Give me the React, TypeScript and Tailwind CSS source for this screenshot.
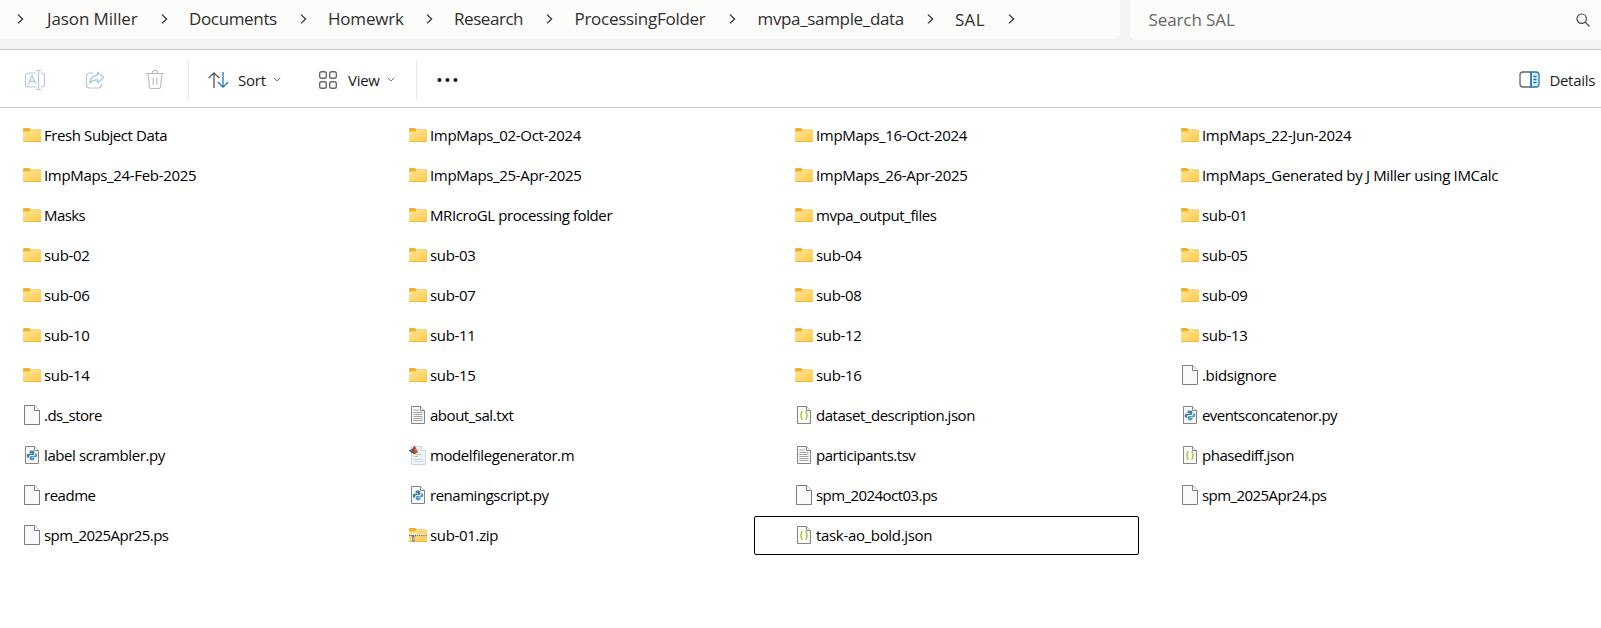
type IconKind = 'folder' | 'file' | 'text' | 'json' | 'python' | 'matlab' | 'zip';

interface Entry {
  name: string;
  kind: IconKind;
  tracking?: string;
  focused?: boolean;
}

const T3 = 'tracking-[-0.33px]';
const T35 = 'tracking-[-0.41px]';
const T4 = 'tracking-[-0.47px]';
const T5 = 'tracking-[-0.56px]';

const folder = (name: string, tracking: string = T3): Entry => ({ name, kind: 'folder', tracking });

const entries: Entry[] = [
  folder('Fresh Subject Data', T35),
  folder('ImpMaps_02-Oct-2024'),
  folder('ImpMaps_16-Oct-2024'),
  folder('ImpMaps_22-Jun-2024'),
  folder('ImpMaps_24-Feb-2025'),
  folder('ImpMaps_25-Apr-2025'),
  folder('ImpMaps_26-Apr-2025'),
  folder('ImpMaps_Generated by J Miller using IMCalc'),
  folder('Masks', T5),
  folder('MRIcroGL processing folder', T35),
  folder('mvpa_output_files', T35),
  folder('sub-01'),
  folder('sub-02'),
  folder('sub-03'),
  folder('sub-04'),
  folder('sub-05'),
  folder('sub-06'),
  folder('sub-07'),
  folder('sub-08'),
  folder('sub-09'),
  folder('sub-10'),
  folder('sub-11'),
  folder('sub-12'),
  folder('sub-13'),
  folder('sub-14'),
  folder('sub-15'),
  folder('sub-16'),
  { name: '.bidsignore', kind: 'file', tracking: T3 },
  { name: '.ds_store', kind: 'file', tracking: T5 },
  { name: 'about_sal.txt', kind: 'text', tracking: T4 },
  { name: 'dataset_description.json', kind: 'json', tracking: T4 },
  { name: 'eventsconcatenor.py', kind: 'python', tracking: T5 },
  { name: 'label scrambler.py', kind: 'python', tracking: T35 },
  { name: 'modelfilegenerator.m', kind: 'matlab', tracking: T35 },
  { name: 'participants.tsv', kind: 'text', tracking: T4 },
  { name: 'phasediff.json', kind: 'json', tracking: T4 },
  { name: 'readme', kind: 'file', tracking: T4 },
  { name: 'renamingscript.py', kind: 'python', tracking: T4 },
  { name: 'spm_2024oct03.ps', kind: 'file', tracking: T5 },
  { name: 'spm_2025Apr24.ps', kind: 'file', tracking: T5 },
  { name: 'spm_2025Apr25.ps', kind: 'file', tracking: T5 },
  { name: 'sub-01.zip', kind: 'zip', tracking: T3 },
  { name: 'task-ao_bold.json', kind: 'json', tracking: T3, focused: true },
];

const crumbs = [
  { label: 'Jason Miller', className: 'w-[115px] pl-[1.5px] tracking-[-0.1px]' },
  { label: 'Documents', className: 'w-[110.5px] tracking-[-0.35px]' },
  { label: 'Homewrk', className: 'w-[97.5px] tracking-[-0.2px]' },
  { label: 'Research', className: 'w-[92px] tracking-[-0.45px]' },
  { label: 'ProcessingFolder', className: 'w-[154.5px] tracking-[-0.28px]' },
  { label: 'mvpa_sample_data', className: 'w-[169px] tracking-[-0.34px]' },
  { label: 'SAL', className: 'w-[53px] pt-px tracking-[0.3px]' },
];

function Crumb({ label, className }: { label: string; className: string }) {
  return (
    <>
      <span className={`shrink-0 whitespace-nowrap ${className}`}>{label}</span>
      <CrumbChevron />
    </>
  );
}

function CrumbChevron() {
  return (
    <svg className="mr-[21.5px] h-3 w-[7px] shrink-0" viewBox="0 0 7 12" fill="none" stroke="#333" strokeWidth="1.3">
      <path d="M1 1.6 5.6 6 1 10.4" />
    </svg>
  );
}

function Chevron() {
  return (
    <svg className="h-[5px] w-2 shrink-0" viewBox="0 0 8 5" fill="none" stroke="#777" strokeWidth="1">
      <path d="M.8.8 4 4 7.2.8" />
    </svg>
  );
}

function Page() {
  return (
    <>
      <path d="M3.5 1.5h9l4 4v13h-13z" fill="#fafafa" stroke="#858585" />
      <path d="M12.5 1.5v4h4" fill="#fff" stroke="#858585" />
    </>
  );
}

function FolderShape() {
  return (
    <>
      <path d="M1 5V4a1 1 0 0 1 1-1h5l1.6 1.5H18a1 1 0 0 1 1 1V8H1z" fill="#f0b02a" />
      <path d="M1 6.6h6L8.8 5H18a1 1 0 0 1 1 1v10a1 1 0 0 1-1 1H2a1 1 0 0 1-1-1z" fill="url(#folder-face)" />
      <path d="M1.3 16.5h17.4" stroke="#e9b440" strokeWidth=".9" />
    </>
  );
}

function FileIcon({ kind }: { kind: IconKind }) {
  return (
    <svg className="size-5 shrink-0" viewBox="0 0 20 20" fill="none">
      {kind === 'folder' && <FolderShape />}
      {kind === 'file' && (
        <>
          <path d="M2.5.5h10.2l4.8 4.8v14.2h-15z" fill="#f9f9f9" stroke="#7d7d7d" />
          <path d="M12.5.5v5h5" fill="#fff" stroke="#7d7d7d" />
        </>
      )}
      {kind === 'text' && (
        <>
          <Page />
          <path d="M5.3 5h5.7M5.3 7.5h9.2M5.3 9.5h9.2M5.3 11.5h9.2M5.3 13.5h9.2M5.3 15.5h9.2" stroke="#999" strokeWidth=".9" />
        </>
      )}
      {kind === 'json' && (
        <>
          <Page />
          <path
            d="M8.7 6.8c-1.4 0-1.3.7-1.3 1.7 0 1.100 0 1.700-1.100 2 1.100.2 1.100 1 1.100 2.100 0 1-.1 1.700 1.300 1.700M11.300 6.800c1.400 0 1.300.7 1.300 1.700 0 1.100 0 1.700 1.100 2-1.100.2-1.100 1-1.100 2.100 0 1 .1 1.700-1.300 1.700"
            stroke="#b5c43c"
            strokeWidth="1.500"
          />
        </>
      )}
      {kind === 'python' && (
        <>
          <Page />
          <path
            d="M9.8 5.6c-1.6 0-2.3.5-2.3 1.4v1.2H10v.6H6.2c-1 0-1.500.8-1.500 2s.5 2 1.400 2h1v-1.300c0-.9.7-1.500 1.500-1.500h2.500c.7 0 1.200-.5 1.200-1.200V7c0-.9-.9-1.400-2.500-1.400z"
            fill="#3f83ab"
          />
          <path
            d="M10.200 15.400c1.600 0 2.300-.5 2.300-1.400v-1.200H10v-.6h3.800c1 0 1.500-.8 1.500-2s-.5-2-1.400-2h-.8v1.300c0 .9-.7 1.500-1.500 1.500H9c-.7 0-1.300.5-1.300 1.200V14c0 .9.9 1.400 2.500 1.400z"
            fill="#5b9fbd"
          />
        </>
      )}
      {kind === 'matlab' && (
        <>
          <path d="M3.5 1.5h10l4 4v14h-14z" fill="#edf2f6" stroke="#cdd7df" />
          <path d="M13.5 1.5v4h4" fill="#fff" stroke="#cdd7df" />
          <path d="M8 9.5h5M6 11.5h4" stroke="#a9d3a0" />
          <path d="M6 14.5h9M6 16.5h9" stroke="#cfdae2" />
          <path d="M.6 5.6 4 4l2.2-3L8 8.4 5.4 7.2 4 8.6z" fill="#2f6f9f" />
          <path d="M6.3.8c1.4.8 2.4 4.6 4 6.8C8.6 6.9 7.6 9.600 5.9 9.300 5.3 8.200 4.700 7.600 4 7.200 5.200 6 5.600 2.200 6.300.8z" fill="#b63a1f" />
          <path d="M6.4 1.200c.9 1.400 1.500 4 2.700 5.700-.8.3-1.200.8-1.700 1.200z" fill="#e67a2e" />
        </>
      )}
      {kind === 'zip' && (
        <>
          <FolderShape />
          <path d="M2 10.2h16.5" stroke="#fff0b8" strokeWidth="2.6" />
          <path d="M7 10.5h12" stroke="#6f6f6f" strokeWidth="1.6" strokeDasharray="1.2 .9" />
          <path d="M1 10.5h3" stroke="#8a8a8a" strokeWidth="1.5" />
          <path d="M3.5 10h3v6.500H4.200v-4z" fill="#7d7f84" />
          <path d="M5.3 12.500v2.500" stroke="#d6d6d6" />
        </>
      )}
    </svg>
  );
}

function Row({ entry }: { entry: Entry }) {
  const box = entry.focused
    ? 'mt-px h-[39px] w-[385px] rounded-[2px] border border-black pb-px pl-[39px]'
    : 'h-10 w-[386px] pl-10';
  return (
    <div className={`flex items-center ${box}`}>
      <FileIcon kind={entry.kind} />
      <span className={`ml-[2px] whitespace-nowrap ${entry.tracking ?? ''}`}>{entry.name}</span>
    </div>
  );
}

function AddressBar() {
  return (
    <header className="flex h-[50px] items-start gap-[10px] border-b border-[#c6c9c2] bg-[#f4f3f1] text-[17px] text-[#2e2e2e]">
      <nav className="flex h-[39px] w-[1120px] items-center rounded-br-[5px] bg-[#fcfcfa] pb-px pl-[17px]">
        <CrumbChevron />
        {crumbs.map((c) => (
          <Crumb key={c.label} label={c.label} className={c.className} />
        ))}
      </nav>
      <div className="flex h-10 flex-1 items-center justify-between rounded-bl-[5px] bg-[#fcfcfa] pr-[11px] pl-[18.5px] text-[#666]">
        <span className="tracking-[-0.1px]">Search SAL</span>
        <svg className="size-[14px]" viewBox="0 0 14 14" fill="none" stroke="#444" strokeWidth="1.2">
          <circle cx="5.7" cy="5.7" r="4.7" />
          <path d="m9.2 9.200 4.300 4.300" />
        </svg>
      </div>
    </header>
  );
}

function Toolbar() {
  return (
    <div className="flex h-[58px] items-center border-b border-[#c6c6c6] pt-[2px] pl-6 text-[#1b1b1b]">
      <svg className="size-[22px] shrink-0" viewBox="0 0 22 22" fill="none" strokeWidth="1.2">
        <path d="M12 4H4.5A3 3 0 0 0 1.5 7v8a3 3 0 0 0 3 3H12M17 4c2.200 0 3.500 1.200 3.500 3v8c0 1.800-1.300 3-3.500 3" stroke="#c4c4c4" />
        <path d="M14.5 1.5v19M11.8 1.500h5.400M11.800 20.500h5.400M4.300 15 8 6.500l3.700 8.500M5.600 12.300h4.800" stroke="#a5cbe8" />
      </svg>
      <svg className="ml-[39px] size-5 shrink-0" viewBox="0 0 20 20" fill="none" strokeWidth="1.2" strokeLinejoin="round">
        <path d="M8 3H4.500A3 3 0 0 0 1.500 6v9a3 3 0 0 0 3 3h9a3 3 0 0 0 3-3v-1.500" stroke="#c4c4c4" />
        <path d="M12.500 2.200 18.800 7.500l-6.300 5.300V9.800c-3.500-.2-5.700.9-7.700 3.400.4-4.300 3.100-7.600 7.700-8z" stroke="#9cc8ea" />
      </svg>
      <svg className="ml-10 size-5 shrink-0" viewBox="0 0 20 20" fill="none" stroke="#bcbcbc" strokeWidth="1.2" strokeLinecap="round">
        <path d="M1.500 3.500h17M7.200 3.300a2.800 2.800 0 0 1 5.600 0M3 3.800l1.500 13a2 2 0 0 0 2 1.700h7a2 2 0 0 0 2-1.700l1.500-13M8.200 8.200v6M11.800 8.200v6" />
      </svg>
      <div className="ml-[23px] h-10 w-px shrink-0 bg-[#e6e6e6]" />
      <svg className="ml-[19px] h-[18px] w-[21px] shrink-0" viewBox="0 0 21 18" fill="none" strokeWidth="1.3">
        <path d="M6 17V2M.8 7 6 1.800 11.200 7" stroke="#555" />
        <path d="M15 1v15M9.800 11 15 16.200 20.200 11" stroke="#1f78c8" />
      </svg>
      <span className="ml-[9px] w-[35px] tracking-[-0.2px]">Sort</span>
      <Chevron />
      <svg className="ml-[37px] size-5 shrink-0" viewBox="0 0 20 20" fill="none" stroke="#666" strokeWidth="1.4">
        <rect x="1.7" y="1.7" width="6.6" height="6.6" rx="1.8" />
        <rect x="11.7" y="1.7" width="6.6" height="6.6" rx="1.8" />
        <rect x="1.7" y="11.7" width="6.6" height="6.6" rx="1.8" />
        <rect x="11.7" y="11.7" width="6.6" height="6.6" rx="1.8" />
      </svg>
      <span className="ml-[10px] w-[39px] tracking-[-0.3px]">View</span>
      <Chevron />
      <div className="ml-[21px] h-10 w-px shrink-0 bg-[#e6e6e6]" />
      <svg className="ml-5 h-1 w-[22px] shrink-0" viewBox="0 0 22 4" fill="#1b1b1b">
        <circle cx="2.5" cy="2" r="2" />
        <circle cx="10.5" cy="2" r="2" />
        <circle cx="18.5" cy="2" r="2" />
      </svg>
      <button className="ml-auto flex items-center gap-[9px] pr-[6px]">
        <svg className="h-[17px] w-[21px]" viewBox="0 0 21 17" fill="none" strokeWidth="1.3">
          <path d="M12 1h5a3 3 0 0 1 3 3v9a3 3 0 0 1-3 3h-5z" fill="#d9f0fd" stroke="#1f78c0" />
          <path d="M12 1H4a3 3 0 0 0-3 3v9a3 3 0 0 0 3 3h8" stroke="#666" />
          <path d="M12 1v15M14.500 5.500h3M14.500 8.500h3M14.500 11.500h3" stroke="#1f6fb0" />
        </svg>
        <span className="tracking-[-0.3px]">Details</span>
      </button>
    </div>
  );
}

export default function App() {
  return (
    <div className="h-[628px] w-[1601px] overflow-hidden bg-white font-['Open_Sans','Noto_Sans',sans-serif] text-[15px] leading-5 text-black">
      <svg className="absolute size-0" aria-hidden="true">
        <defs>
          <linearGradient id="folder-face" x1="0" y1="0" x2="1" y2="1">
            <stop offset="0" stopColor="#ffe59a" />
            <stop offset="1" stopColor="#fccb45" />
          </linearGradient>
        </defs>
      </svg>
      <AddressBar />
      <Toolbar />
      <main className="-ml-[18px] grid grid-cols-[repeat(4,386px)] pt-[7px]">
        {entries.map((entry) => (
          <Row key={entry.name} entry={entry} />
        ))}
      </main>
    </div>
  );
}
